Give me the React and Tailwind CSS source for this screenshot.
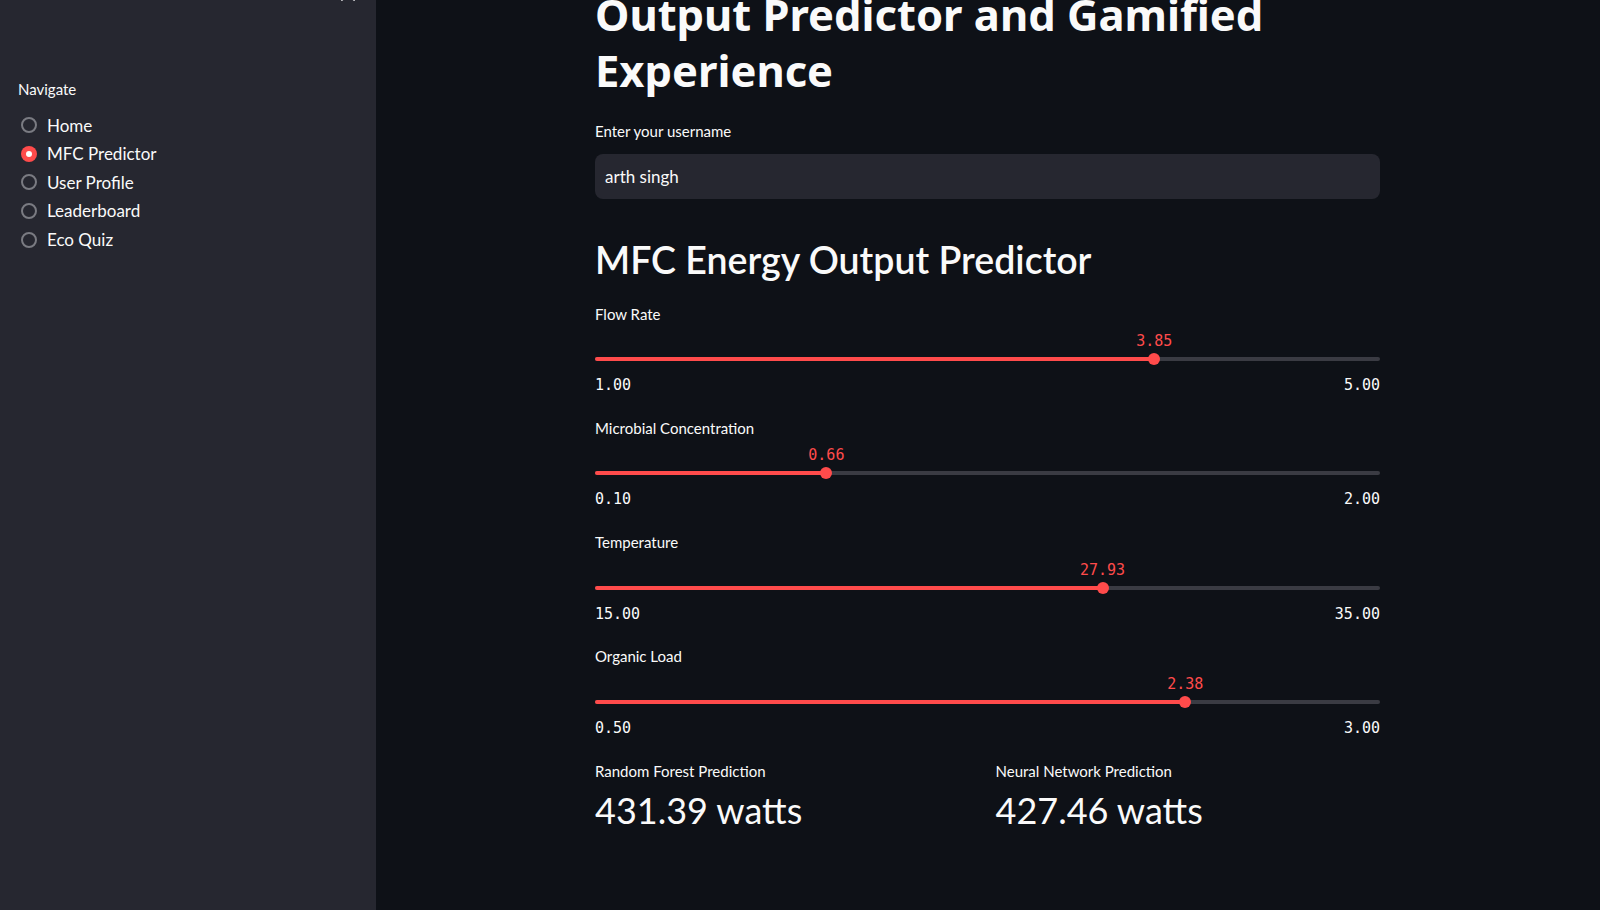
import { useState } from 'react';

const sans = { fontFamily: '"Lato", "Noto Sans", sans-serif' };

const pages = ['Home', 'MFC Predictor', 'User Profile', 'Leaderboard', 'Eco Quiz'];

const sliders = [
  { label: 'Flow Rate', min: 1, max: 5, value: 3.85 },
  { label: 'Microbial Concentration', min: 0.1, max: 2, value: 0.66 },
  { label: 'Temperature', min: 15, max: 35, value: 27.93 },
  { label: 'Organic Load', min: 0.5, max: 3, value: 2.38 },
];

const Radio = ({ checked }) =>
  checked ? (
    <span className="w-4 h-4 rounded-full bg-[#ff4b4b] flex items-center justify-center flex-shrink-0">
      <span className="w-[6px] h-[6px] rounded-full bg-white" />
    </span>
  ) : (
    <span className="w-4 h-4 rounded-full border-2 border-[#7a7b82] flex-shrink-0" />
  );

const Slider = ({ label, min, max, value }) => {
  const pct = ((value - min) / (max - min)) * 100;
  return (
    <div className="flex flex-col">
      <div className="h-[21px] leading-[21px] text-[15px] text-[#fafafa]">{label}</div>
      <div className="relative h-[20px] mt-[6.5px]">
        <span
          className="absolute top-0 -translate-x-1/2 text-[15px] leading-[20px] text-[#ff4b4b] font-['DejaVu_Sans_Mono',monospace]"
          style={{ left: `${pct}%` }}
        >
          {value.toFixed(2)}
        </span>
      </div>
      <div className="relative h-3 mt-[2px] flex items-center">
        <div className="w-full h-1 rounded-full bg-[#3a3b43] overflow-hidden">
          <div className="h-full bg-[#ff4b4b]" style={{ width: `${pct}%` }} />
        </div>
        <span
          className="absolute top-0 w-3 h-3 -translate-x-1/2 rounded-full bg-[#ff4b4b]"
          style={{ left: `${pct}%` }}
        />
      </div>
      <div className="flex justify-between h-[20px] mt-[10px] text-[15px] leading-[20px] text-[#fafafa] font-['DejaVu_Sans_Mono',monospace]">
        <span>{min.toFixed(2)}</span>
        <span>{max.toFixed(2)}</span>
      </div>
    </div>
  );
};

export default function App() {
  const [page, setPage] = useState('MFC Predictor');

  return (
    <div className="flex w-[1600px] h-[910px] overflow-hidden bg-[#0e1117] text-[#fafafa]" style={sans}>
      <aside className="relative w-[376px] h-full bg-[#262730] flex-shrink-0 px-[18px]">
        <svg className="absolute left-[336px] top-[-17px]" width="24" height="20" viewBox="0 0 24 20" fill="none" stroke="#d6d6d9" strokeWidth="2" strokeLinecap="round">
          <path d="M6 2l12 15M18 2L6 17" />
        </svg>
        <div className="pt-[78.5px] h-[21px] leading-[21px] text-[15px] box-content">Navigate</div>
        <div className="mt-[11.5px] flex flex-col">
          {pages.map((p) => (
            <button
              key={p}
              onClick={() => setPage(p)}
              className="h-[28.6px] flex items-center gap-[10px] pl-[3px] text-[17px] text-left"
            >
              <Radio checked={page === p} />
              <span>{p}</span>
            </button>
          ))}
        </div>
      </aside>

      <main className="flex-1 h-full">
        <div className="w-[785px] ml-[219px] mt-[-70px] flex flex-col">
          <h1 className="text-[43.5px] leading-[56px] font-bold font-['Noto_Sans',sans-serif]">
            <span className="block whitespace-nowrap">MFC Energy</span>
            <span className="block whitespace-nowrap">Output Predictor and Gamified</span>
            <span className="block whitespace-nowrap">Experience</span>
          </h1>

          <label className="mt-[23px] h-[21px] leading-[21px] text-[15px]">Enter your username</label>
          <div className="mt-[12px] h-[45px] rounded-lg bg-[#262730] flex items-center px-[10px] text-[17px]">
            arth singh
          </div>

          <h2 className="mt-[38.5px] text-[37.5px] leading-[43px] font-semibold">MFC Energy Output Predictor</h2>

          <div className="mt-[23px] flex flex-col gap-[22.8px]">
            {sliders.map((s) => (
              <Slider key={s.label} {...s} />
            ))}
          </div>

          <div className="mt-[23px] grid grid-cols-2 gap-4">
            <div>
              <div className="h-[21px] leading-[21px] text-[15px]">Random Forest Prediction</div>
              <div className="mt-[7.5px] text-[36px] leading-[43px]">431.39 watts</div>
            </div>
            <div>
              <div className="h-[21px] leading-[21px] text-[15px]">Neural Network Prediction</div>
              <div className="mt-[7.5px] text-[36px] leading-[43px]">427.46 watts</div>
            </div>
          </div>
        </div>
      </main>
    </div>
  );
}
